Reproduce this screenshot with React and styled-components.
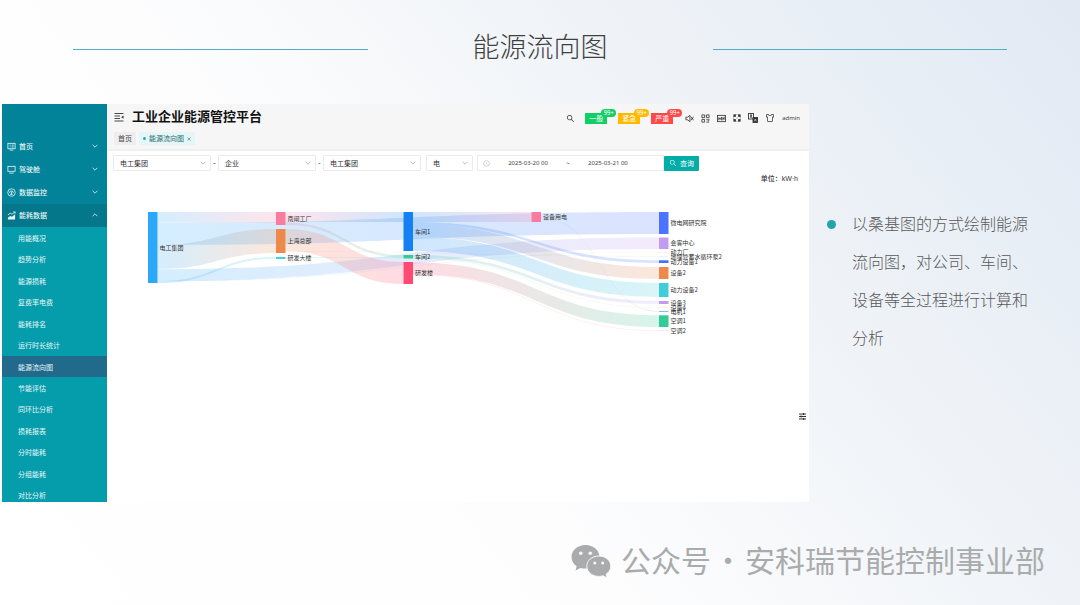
import React, { useState } from 'react'
import styled, { createGlobalStyle } from 'styled-components'
import { AiOutlineSearch, AiOutlineSkin, AiOutlineClockCircle } from 'react-icons/ai'

const GlobalStyle = createGlobalStyle`
  * {
    box-sizing: border-box;
  }
  body {
    margin: 0;
    font-family: "Noto Sans CJK SC", sans-serif;
    color: #333;
  }
  button, input, select {
    font-family: inherit;
  }
`
const Page = styled.div`
  height: 100vh;
  display: grid;
  grid-template-rows: 104px minmax(0, 1fr) 103px;
  background: linear-gradient(50deg, #fff 0%, #fdfdfe 40%, #eff3f7 68%, #e8eef6 85%, #e2e9f2 100%);
`
const SlideHeader = styled.header`
  display: grid;
  grid-template-columns: 1fr auto 1fr;
  align-items: center;
  column-gap: 105px;
  padding: 0 73px 12px;
`
const Rule = styled.hr`
  width: 100%;
  height: 1px;
  margin: 6px 0 0;
  border: none;
  background-color: #4fb0be;
`
const SlideTitle = styled.h1`
  margin: 0;
  font-size: 27px;
  line-height: 40px;
  font-weight: 300;
  color: #404040;
`
const Body = styled.main`
  display: grid;
  grid-template-columns: minmax(0, 1fr) 271px;
  grid-template-rows: minmax(0, 1fr);
  padding-left: 2px;
`
const Platform = styled.section`
  display: grid;
  grid-template-columns: 105px minmax(0, 1fr);
  grid-template-rows: minmax(0, 1fr);
  background-color: #fff;
  position: relative;
`
const Sidebar = styled.nav`
  padding-top: 31px;
  overflow: hidden;
  background-color: #038399;
`
const Group = styled.button`
  display: flex;
  align-items: center;
  gap: 3px;
  width: 100%;
  height: 23px;
  padding: 0 9px 1px 5px;
  border: none;
  background-color: ${p => p.$open ? '#04778b' : 'transparent'};
  color: #e6f6f8;
  font-size: 7px;
  line-height: 12px;
  font-weight: 500;
  cursor: pointer;
`
const GroupLabel = styled.span`
  flex: 1;
  text-align: left;
`
const SubMenu = styled.div`
  height: 279px;
  display: flex;
  flex-direction: column;
  background-color: #059cab;
`
const SubLink = styled.a`
  flex: 1;
  display: flex;
  align-items: center;
  padding-left: 16px;
  background-color: ${p => p.$active ? '#226a8b' : 'transparent'};
  color: #e6f8f9;
  font-size: 7px;
  line-height: 12px;
  text-decoration: none;
`
const Content = styled.div`
  display: flex;
  flex-direction: column;
  min-width: 0;
`
const TopArea = styled.div`
  background-color: #f6f6f6;
  border-bottom: 2px solid #f0f0f0;
  padding: 0 9px 4px 7px;
`
const TopBar = styled.div`
  height: 26px;
  display: flex;
  align-items: center;
  gap: 8px;
`
const PlatformTitle = styled.h2`
  flex: 1;
  margin: 0;
  padding-bottom: 3px;
  font-size: 13px;
  line-height: 20px;
  font-weight: 700;
  color: #111;
`
const Tools = styled.div`
  display: flex;
  align-items: center;
  gap: 7px;
  padding-top: 2px;
  color: #333;
`
const Alarms = styled.div`
  display: flex;
  gap: 11px;
  margin: 0 5px 0 3px;
`
const Alarm = styled.span`
  position: relative;
  width: 22px;
  height: 11px;
  background-color: ${p => p.$color};
  color: #fff;
  font-size: 7px;
  line-height: 11px;
  text-align: center;
`
const Count = styled.span`
  position: absolute;
  top: -4px;
  right: -9px;
  width: 15px;
  height: 8px;
  border-radius: 4px;
  background-color: ${p => p.$color};
  font-size: 6px;
  line-height: 8px;
`
const User = styled.span`
  font-family: "Open Sans", sans-serif;
  font-size: 6px;
  line-height: 12px;
`
const Tabs = styled.div`
  display: flex;
  gap: 3px;
  padding-top: 2px;
`
const Tab = styled.a`
  display: flex;
  align-items: center;
  gap: 3px;
  height: 13px;
  padding: 0 4px;
  background-color: ${p => p.$active ? '#e4f6f5' : '#eee'};
  color: ${p => p.$active ? '#2b6c70' : '#444'};
  font-size: 7px;
  line-height: 13px;
  text-decoration: none;
`
const Dot = styled.i`
  width: 3px;
  height: 3px;
  border-radius: 50%;
  background-color: #1bb5b0;
`
const Filters = styled.form`
  display: flex;
  align-items: center;
  padding: 4px 6px 0;
`
const SelectBox = styled.label`
  position: relative;
  width: ${p => p.$small ? 47 : 98}px;
  margin-right: ${p => p.$small ? 4 : 0}px;
`
const Select = styled.select`
  appearance: none;
  display: block;
  width: 100%;
  height: 16px;
  padding: 0 6px;
  border: 1px solid #ebebeb;
  border-radius: 1px;
  background-color: #fff;
  color: #333;
  font-size: 7px;
  line-height: 14px;
`
const Arrow = styled.span`
  position: absolute;
  top: 5px;
  right: 5px;
  display: flex;
  color: #aaa;
  pointer-events: none;
`
const Dash = styled.span`
  width: ${p => p.$blank ? 5 : 7}px;
  font-size: 8px;
  line-height: 16px;
  text-align: center;
`
const DateRange = styled.div`
  display: flex;
  align-items: center;
  width: 187px;
  height: 16px;
  padding-left: 5px;
  border: 1px solid #ebebeb;
  color: #bbb;
  font-size: 7px;
`
const DateInput = styled.input`
  width: 76px;
  padding: 0;
  border: none;
  background: none;
  color: #444;
  font-size: 6px;
  line-height: 12px;
  text-align: center;
  font-family: "Noto Sans", sans-serif;
`
const Tilde = styled.span`
  color: #444;
  line-height: 12px;
`
const QueryButton = styled.button`
  display: flex;
  align-items: center;
  justify-content: center;
  gap: 3px;
  width: 35px;
  height: 15px;
  padding: 0;
  border: none;
  border-radius: 1px;
  background-color: #04aca8;
  color: #fff;
  font-size: 7px;
  line-height: 15px;
`
const Unit = styled.p`
  margin: 2px 11px 0;
  font-family: "Liberation Sans", "Noto Sans CJK SC", sans-serif;
  font-size: 7px;
  line-height: 12px;
  font-weight: 500;
  text-align: right;
`
const Chart = styled.svg`
  display: block;
  width: 100%;
  margin-top: 15px;
`
const NodeLabel = styled.text`
  font-size: 6px;
  fill: #333;
`
const Settings = styled.button`
  position: absolute;
  right: 2px;
  bottom: 81px;
  display: flex;
  padding: 1px;
  border: none;
  background: none;
  color: #222;
`
const Notes = styled.ul`
  margin: 0;
  padding: 100px 50px 0 18px;
  list-style: none;
`
const Note = styled.li`
  display: grid;
  grid-template-columns: 9px 1fr;
  column-gap: 16px;
  font-size: 16px;
  line-height: 38px;
  font-weight: 300;
  color: #595959;

  &::before {
    content: "";
    width: 9px;
    height: 9px;
    margin-top: 16px;
    border-radius: 50%;
    background-color: #22a3ad;
  }
`
const Footer = styled.footer`
  display: flex;
  align-items: center;
  justify-content: flex-end;
  gap: 10px;
  padding: 15px 35px 0 0;
  color: #a9abac;
  font-size: 30px;
  line-height: 44px;
`
const FooterText = styled.span`
  display: flex;
  gap: 2px;
  padding-bottom: 4px;
`

const groupIcons = {
  home: <><rect x="1" y="1.5" width="8" height="6" /><path d="M3 3.5h1M5 3.5h2.5M3 5.5h1M5 5.5h2.5M3 9h4" /></>,
  cockpit: <><rect x="1" y="1.5" width="8" height="5.5" /><path d="M2.5 9h5" /></>,
  monitor: <><circle cx="5" cy="5" r="4.2" /><path d="M2.8 5.5a2.2 2.2 0 0 1 4.4 0M5 4v3M3.5 7h3" /></>,
  energy: <><path d="M1 4.5l2.5-2 2 1L9 1M7 1h2v2" /><path d="M1 9.5V7.5L3.5 5.5l2 1L9 3.5v6z" fill="currentColor" stroke="none" /></>
}
const groups = [
  { label: '首页', icon: 'home' },
  { label: '驾驶舱', icon: 'cockpit' },
  { label: '数据监控', icon: 'monitor' },
  { label: '能耗数据', icon: 'energy', open: true }
]
const subItems = [
  '用能概况', '趋势分析', '能源损耗', '复费率电费', '能耗排名', '运行时长统计', '能源流向图',
  '节能评估', '同环比分析', '损耗报表', '分时能耗', '分组能耗', '对比分析'
]
const alarms = [
  { label: '一般', color: '#13ce66' },
  { label: '紧急', color: '#ffba00' },
  { label: '严重', color: '#ff4949' }
]

// x and y are in chart units, h is the node value
const nodes = [
  { name: '电工集团', x: 41, y: 12, h: 71, color: '#2ba8f9' },
  { name: '南闸工厂', x: 169, y: 12, h: 13, color: '#fb7a9f' },
  { name: '上海总部', x: 169, y: 29, h: 24, color: '#ed894b' },
  { name: '研发大楼', x: 169, y: 57, h: 2, color: '#44d0dc' },
  { name: '车间1', x: 296.5, y: 12, h: 39, color: '#1480f2' },
  { name: '车间2', x: 296.5, y: 55, h: 3.5, color: '#33cc99' },
  { name: '研发楼', x: 296.5, y: 62, h: 22, color: '#fe4a72' },
  { name: '设备用电', x: 424.5, y: 12, h: 10, color: '#fb7a9f' },
  { name: '微电网研究院', x: 552, y: 12, h: 22, color: '#4a73fe' },
  { name: '会客中心', x: 552, y: 37.5, h: 11.5, color: '#c29bf3' },
  { name: '动力厂', x: 552, y: 52.2, h: 0.2, color: '#f9d27a' },
  { name: '地埋管蓄水循环泵2', x: 552, y: 56.4, h: 0.2, color: '#7fd8f0' },
  { name: '动力设备1', x: 552, y: 60.3, h: 2.7, color: '#4870ff' },
  { name: '设备2', x: 552, y: 67, h: 12, color: '#ed894b' },
  { name: '动力设备2', x: 552, y: 83, h: 14, color: '#40cdd9' },
  { name: '设备3', x: 552, y: 101, h: 3, color: '#c29bf3' },
  { name: '设备4', x: 552, y: 107.5, h: 0.2, color: '#f9d27a' },
  { name: '电机1', x: 552, y: 111.2, h: 0.7, color: '#5b9df5' },
  { name: '空调1', x: 552, y: 115.3, h: 11.7, color: '#33cc99' },
  { name: '空调2', x: 552, y: 130.6, h: 0.2, color: '#fe7a98' }
]
// [source, target, source y, target y, thickness]
const links = [
  [0, 1, 12, 12, 10.8],
  [0, 8, 23, 12, 22],
  [0, 2, 45, 29, 24],
  [0, 9, 69.3, 37.5, 11.6],
  [0, 3, 81.3, 57, 1.9],
  [0, 10, 80.9, 52.1, 0.4],
  [1, 4, 12, 12, 10],
  [1, 5, 22.5, 55, 2.5],
  [2, 6, 29, 62, 22],
  [2, 11, 51, 56.3, 0.4],
  [3, 5, 57, 57.5, 0.8],
  [4, 7, 12, 12, 10],
  [4, 12, 22, 60.3, 2.7],
  [4, 13, 24.8, 67, 12],
  [4, 14, 37, 83, 14],
  [5, 15, 55, 101, 2.8],
  [5, 16, 58, 107.4, 0.4],
  [6, 18, 62.5, 115.3, 11.7],
  [6, 19, 74.6, 130.5, 0.4],
  [7, 17, 17.5, 111.2, 0.6]
]
const NODE_WIDTH = 9.5

const linkPath = (x1, x2, y1, y2, t) => {
  const m = (x1 + x2) / 2
  return `M${x1} ${y1}C${m} ${y1} ${m} ${y2} ${x2} ${y2}V${y2 + t}C${m} ${y2 + t} ${m} ${y1 + t} ${x1} ${y1 + t}Z`
}

function Icon({ size = 9, children }) {
  return (
    <svg width={size} height={size} viewBox="0 0 10 10" fill="none" stroke="currentColor" strokeWidth="0.9">
      {children}
    </svg>
  )
}

function Chevron({ up }) {
  return <Icon size={6}><path d={up ? 'M1 7l4-4 4 4' : 'M1 3l4 4 4-4'} strokeWidth="1.3" /></Icon>
}

function Sankey() {
  return (
    <Chart viewBox="0 0 702 140" role="img" aria-label="能源流向图">
      <defs>
        {links.map(([s, t], i) => (
          <linearGradient key={i} id={`flow${i}`} gradientUnits="userSpaceOnUse" x1={nodes[s].x + NODE_WIDTH} x2={nodes[t].x} y1="0" y2="0">
            <stop offset="0" stopColor={nodes[s].color} />
            <stop offset="1" stopColor={nodes[t].color} />
          </linearGradient>
        ))}
      </defs>
      {links.map(([s, t, y1, y2, h], i) => (
        <path key={i} d={linkPath(nodes[s].x + NODE_WIDTH, nodes[t].x, y1, y2, h)} fill={`url(#flow${i})`} opacity="0.2" />
      ))}
      {nodes.map(n => <rect key={n.name} x={n.x} y={n.y} width={NODE_WIDTH} height={n.h} fill={n.color} />)}
      {nodes.map(n => <NodeLabel key={n.name} x={n.x + NODE_WIDTH + 2} y={n.y + n.h / 2 + 2}>{n.name}</NodeLabel>)}
    </Chart>
  )
}

function FilterSelect({ label, value, small }) {
  return (
    <SelectBox $small={small}>
      <Select aria-label={label} defaultValue={value}>
        <option>{value}</option>
      </Select>
      <Arrow><Chevron /></Arrow>
    </SelectBox>
  )
}

function App() {

  const [start, setStart] = useState('2025-03-20 00')
  const [end, setEnd] = useState('2025-03-21 00')

  return (
    <Page lang="zh-CN">
      <GlobalStyle />
      <SlideHeader>
        <Rule />
        <SlideTitle>能源流向图</SlideTitle>
        <Rule />
      </SlideHeader>
      <Body>
        <Platform>
          <Sidebar>
            {groups.map(g => (
              <Group key={g.label} $open={g.open} aria-expanded={!!g.open}>
                <Icon>{groupIcons[g.icon]}</Icon>
                <GroupLabel>{g.label}</GroupLabel>
                <Chevron up={g.open} />
              </Group>
            ))}
            <SubMenu>
              {subItems.map(s => <SubLink key={s} href="#" $active={s === '能源流向图'}>{s}</SubLink>)}
            </SubMenu>
          </Sidebar>
          <Content>
            <TopArea>
              <TopBar>
                <Icon size={10}><path d="M0.5 1.5h9M0.5 4H6M0.5 6.5H6M0.5 9h9" /><path d="M9.5 3.6L7.2 5.2l2.3 1.6z" fill="currentColor" stroke="none" /></Icon>
                <PlatformTitle>工业企业能源管控平台</PlatformTitle>
                <Tools>
                  <AiOutlineSearch size={9} />
                  <Alarms>
                    {alarms.map(a => (
                      <Alarm key={a.label} $color={a.color}>{a.label}<Count $color={a.color}>99+</Count></Alarm>
                    ))}
                  </Alarms>
                  <Icon><path d="M1 3.5h2l2.5-2v7L3 6.5H1zM6.5 3l3 4M9.5 3l-3 4" /></Icon>
                  <Icon><path d="M1 1h3v3H1zM6 1h3v3H6zM1 6h3v3H1zM6 6h1v1M8 6h1v1M6 9h3M7.5 7.5H9" /></Icon>
                  <Icon><rect x="0.5" y="1.5" width="9" height="7" /><path d="M2 7V4l1.5 2L5 3.5V7M6.5 7V4L8 6V3" /></Icon>
                  <Icon size={8}><path d="M1 1h3L1 4zM9 1v3L6 1zM1 9V6l3 3zM9 9H6l3-3z" fill="currentColor" /><path d="M1 1l3 3M9 1L6 4M1 9l3-3M9 9L6 6" /></Icon>
                  <Icon size={10}><rect x="0.5" y="0.5" width="5" height="5.5" /><path d="M2 2.2h2M3 1.5v3M2 4h2" /><rect x="5" y="4.5" width="4.5" height="5" fill="currentColor" /><path d="M6.3 8.3l1-2.3 1 2.3" stroke="#fff" strokeWidth="0.6" /></Icon>
                  <AiOutlineSkin size={10} />
                  <User>admin</User>
                </Tools>
              </TopBar>
              <Tabs>
                <Tab href="#">首页</Tab>
                <Tab href="#" $active><Dot />能源流向图<Icon size={4}><path d="M1 1l8 8M9 1L1 9" strokeWidth="1.4" /></Icon></Tab>
              </Tabs>
            </TopArea>
            <Filters onSubmit={e => e.preventDefault()}>
              <FilterSelect label="集团" value="电工集团" />
              <Dash>-</Dash>
              <FilterSelect label="类型" value="企业" />
              <Dash>-</Dash>
              <FilterSelect label="企业" value="电工集团" />
              <Dash $blank />
              <FilterSelect label="能源" value="电" small />
              <DateRange>
                <AiOutlineClockCircle size={7} />
                <DateInput aria-label="开始时间" value={start} onChange={e => setStart(e.target.value)} />
                <Tilde>~</Tilde>
                <DateInput aria-label="结束时间" value={end} onChange={e => setEnd(e.target.value)} />
              </DateRange>
              <QueryButton><AiOutlineSearch size={8} />查询</QueryButton>
            </Filters>
            <Unit>单位：kW·h</Unit>
            <Sankey />
          </Content>
          <Settings aria-label="设置">
            <Icon size={7}><path d="M0 1.5h10M0 5h10M0 8.5h10M6.5 0v3M3 3.5v3M6.5 7v3" strokeWidth="1.3" /></Icon>
          </Settings>
        </Platform>
        <Notes>
          <Note>以桑基图的方式绘制能源流向图，对公司、车间、设备等全过程进行计算和分析</Note>
        </Notes>
      </Body>
      <Footer>
        <svg width="40" height="34" viewBox="0 0 40 34" fill="currentColor">
          <path d="M14.5 1C6.7 1 .5 6.2 .5 12.9c0 3.8 2 7.1 5.2 9.3L4.5 26.5l5-2.6c1.6.5 3.3.7 5 .7 7.8 0 14-5.2 14-11.8S22.3 1 14.5 1z" />
          <path d="M27.8 12c-6.7 0-12 4.5-12 10.2s5.3 10.2 12 10.2c1.5 0 2.9-.2 4.2-.6l4.2 2.2-1.1-3.7c2.9-1.9 4.7-4.8 4.7-8.1C39.8 16.5 34.5 12 27.8 12z" stroke="#f6f8fa" />
          <g fill="#f6f8fa">
            <circle cx="9.8" cy="9.3" r="1.8" />
            <circle cx="19.3" cy="9.3" r="1.8" />
            <circle cx="23.8" cy="19" r="1.5" />
            <circle cx="31.7" cy="19" r="1.5" />
          </g>
        </svg>
        <FooterText><span>公众号</span><span>·</span><span>安科瑞节能控制事业部</span></FooterText>
      </Footer>
    </Page>
  )
}

export default App
